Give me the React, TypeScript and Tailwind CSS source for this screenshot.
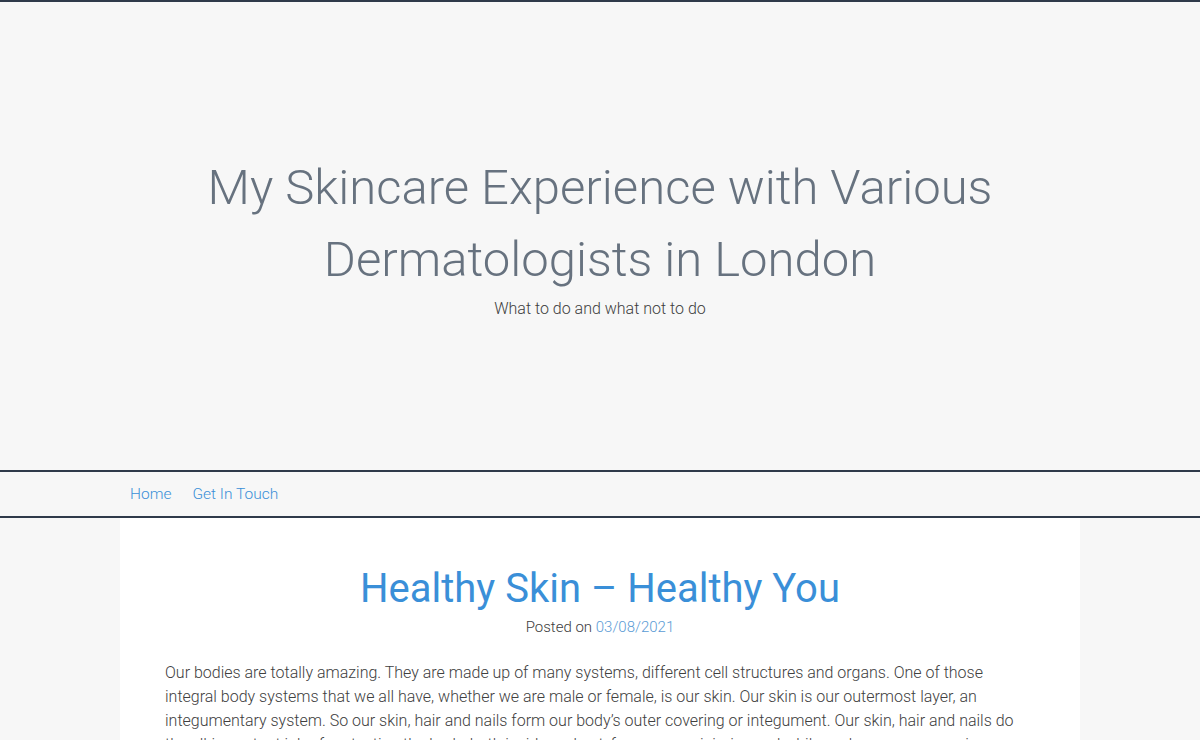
import React from "react";

export default function App() {
  const slab = { fontFamily: "'Roboto Slab', Roboto, 'Noto Sans', sans-serif" };
  return (
    <div className="min-h-screen bg-[#f7f7f7] border-t-2 border-[#2f3a4a]" style={slab}>
      <header className="h-[468px] flex flex-col items-center justify-center text-center">
        <h1 className="w-[960px] text-[49px] leading-[72px] font-light text-[#67727f]">
          My Skincare Experience with Various Dermatologists in London
        </h1>
        <p className="mt-[1px] text-[16px] leading-[24px] font-light text-[#3d3d3d]">What to do and what not to do</p>
      </header>
      <nav className="border-y-2 border-[#2f3a4a] bg-[#f7f7f7]">
        <div className="w-[960px] mx-auto px-[10px] pt-[1px] h-[44px] flex items-center gap-[21px] text-[15.5px] font-light text-[#3a8fd8]">
          <a href="#">Home</a>
          <a href="#">Get In Touch</a>
        </div>
      </nav>
      <main className="w-[960px] mx-auto bg-white px-[45px] pt-[47px] pb-10">
        <h2
          className="text-center text-[40px] leading-[48px] text-[#3a8fd8]"
          style={{ fontFamily: "Roboto, 'Noto Sans', sans-serif", fontWeight: 400 }}
        >
          Healthy Skin – Healthy You
        </h2>
        <p className="mt-[2px] text-center text-[15px] leading-[24px] font-light text-[#3d3d3d]">
          Posted on <a href="#" className="text-[#5a9bd5]">03/08/2021</a>
        </p>
        <p className="mt-[22px] text-[16px] leading-[24px] font-light text-[#404040]">
          Our bodies are totally amazing. They are made up of many systems, different cell structures and organs. One of those
          <br />
          integral body systems that we all have, whether we are male or female, is our skin. Our skin is our outermost layer, an
          <br />
          integumentary system. So our skin, hair and nails form our body’s outer covering or integument. Our skin, hair and nails do
          <br />
          the all-important job of protecting the body, both inside and out, from germs, injuries and while we keep our organs in
          <br />
          place. Looking after our skin is therefore one of the most important things we can do for our health.
        </p>
      </main>
    </div>
  );
}
